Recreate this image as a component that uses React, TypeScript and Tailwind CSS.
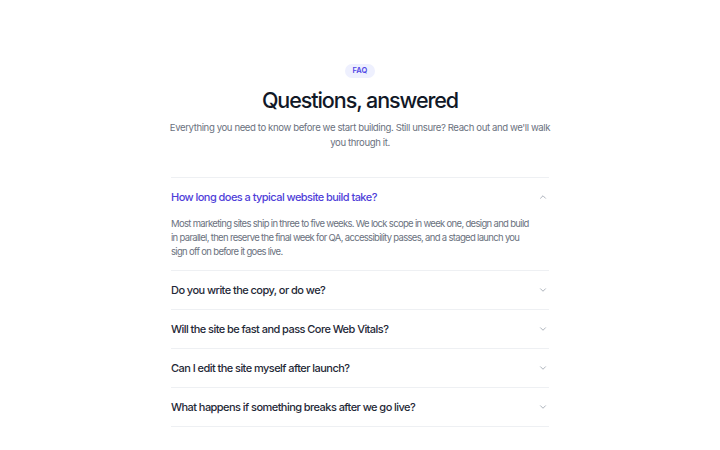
import React from "react";

const faqs = [
  {
    q: "How long does a typical website build take?",
    a: "Most marketing sites ship in three to five weeks. We lock scope in week one, design and build in parallel, then reserve the final week for QA, accessibility passes, and a staged launch you sign off on before it goes live.",
    open: true,
  },
  { q: "Do you write the copy, or do we?" },
  { q: "Will the site be fast and pass Core Web Vitals?" },
  { q: "Can I edit the site myself after launch?" },
  { q: "What happens if something breaks after we go live?" },
];

function Chevron({ up }: { up?: boolean }) {
  return (
    <svg width="10" height="10" viewBox="0 0 24 24" fill="none" stroke="#9ca3af" strokeWidth="2" strokeLinecap="round" strokeLinejoin="round">
      {up ? <path d="M6 15l6-6 6 6" /> : <path d="M6 9l6 6 6-6" />}
    </svg>
  );
}

export default function App() {
  return (
    <div className="min-h-[450px] w-full bg-white flex justify-center" style={{ fontFamily: "Inter, 'Noto Sans', sans-serif" }}>
      <div className="w-[378px] pt-[64px] flex flex-col items-center">
        <span className="rounded-full bg-[#eef0fe] px-[7px] h-[14px] flex items-center text-[7.5px] font-semibold tracking-[0.02em] text-[#4f46e5]">FAQ</span>
        <h1 className="mt-[7px] text-[21.5px] leading-[30px] font-medium tracking-[-0.05em] text-[#111827]">Questions, answered</h1>
        <p className="mt-[5px] w-[382px] text-center text-[9.6px] leading-[15px] tracking-[-0.4px] text-[#6b7280]">
          Everything you need to know before we start building. Still unsure? Reach out and we'll walk you through it.
        </p>
        <div className="mt-[27px] w-full border-t border-[#eef0f3]">
          {faqs.map((f) => (
            <div key={f.q} className="border-b border-[#eef0f3]">
              <div className="flex items-center justify-between h-[38px]">
                <span className={`text-[11px] font-medium tracking-[-0.55px] ${f.open ? "text-[#4f3fd9]" : "text-[#1f2937]"}`}>{f.q}</span>
                <span className="mr-[1px]"><Chevron up={f.open} /></span>
              </div>
              {f.open && (
                <p className="mt-[1px] pb-[11px] pr-[18px] text-[9.5px] leading-[14px] tracking-[-0.68px] text-[#6b7280]">{f.a}</p>
              )}
            </div>
          ))}
        </div>
      </div>
    </div>
  );
}
